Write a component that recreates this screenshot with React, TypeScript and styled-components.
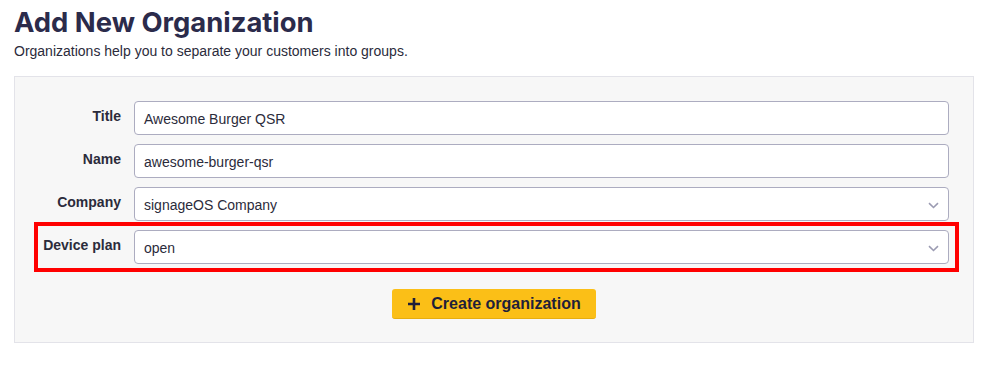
import React from "react";
import styled, { createGlobalStyle } from "styled-components";

const GlobalStyle = createGlobalStyle`
  html, body { margin: 0; padding: 0; background: #ffffff; }
  body { font-family: "Liberation Sans", Arial, sans-serif; color: #2b2b45; }
  * { box-sizing: border-box; }
`;

const Page = styled.div`
  padding: 4px 10px 0 14px;
  width: 984px;
`;

const Heading = styled.h1`
  margin: 0;
  font-family: Inter, "Liberation Sans", sans-serif;
  font-weight: 700;
  font-size: 27.4px;
  line-height: 36px;
  color: #2b2b4b;
`;

const Subtitle = styled.p`
  margin: 2px 0 0;
  font-size: 14px;
  line-height: 18px;
  color: #2b2b3b;
`;

const Panel = styled.div`
  margin-top: 16px;
  background: #f7f7f7;
  border: 1px solid #e3e3e9;
  padding: 24px 24px 23px 24px;
`;

const Form = styled.div`
  display: flex;
  flex-direction: column;
  gap: 9px;
`;

const Row = styled.div<{ $highlight?: boolean }>`
  position: relative;
  display: grid;
  grid-template-columns: 82px 1fr;
  column-gap: 13px;
  align-items: start;
  ${(p) =>
    p.$highlight &&
    `
    &::after {
      content: "";
      position: absolute;
      top: -8px;
      bottom: -8px;
      left: -5px;
      right: -10px;
      border: 4px solid #ff0000;
      pointer-events: none;
    }
  `}
`;

const Label = styled.label`
  text-align: right;
  font-weight: 700;
  font-size: 14px;
  line-height: 20px;
  padding-top: 5px;
  color: #2b2b3b;
  white-space: nowrap;
`;

const Field = styled.div`
  height: 34px;
  background: #ffffff;
  border: 1px solid #acacc0;
  border-radius: 4px;
  padding: 2px 9px 0;
  display: flex;
  align-items: center;
  justify-content: space-between;
  font-size: 14px;
  color: #2b2b3b;
`;

const Chevron = styled.svg`
  width: 11px;
  height: 7px;
  flex: none;
`;

const Actions = styled.div`
  display: flex;
  justify-content: center;
  margin-top: 25px;
`;

const Button = styled.button`
  display: inline-flex;
  align-items: center;
  gap: 10px;
  height: 30px;
  padding: 0 15px;
  background: #fbbf17;
  border: none;
  border-bottom: 1px solid #e6ad10;
  border-radius: 3px;
  font-family: "Liberation Sans", Arial, sans-serif;
  font-weight: 700;
  font-size: 16px;
  color: #1f1f3a;
  cursor: pointer;
`;

const ChevronIcon = () => (
  <Chevron viewBox="0 0 11 7">
    <path d="M1 1.2 L5.5 5.5 L10 1.2" fill="none" stroke="#9b9bb2" strokeWidth="1.6" />
  </Chevron>
);

const PlusIcon = () => (
  <svg width="14" height="14" viewBox="0 0 14 14">
    <path d="M7 1 V13 M1 7 H13" stroke="#1f1f3a" strokeWidth="2.6" />
  </svg>
);

export default function App() {
  return (
    <>
      <GlobalStyle />
      <Page>
        <Heading>Add New Organization</Heading>
        <Subtitle>Organizations help you to separate your customers into groups.</Subtitle>
        <Panel>
          <Form>
            <Row>
              <Label>Title</Label>
              <Field>Awesome Burger QSR</Field>
            </Row>
            <Row>
              <Label>Name</Label>
              <Field>awesome-burger-qsr</Field>
            </Row>
            <Row>
              <Label>Company</Label>
              <Field>
                <span>signageOS Company</span>
                <ChevronIcon />
              </Field>
            </Row>
            <Row $highlight>
              <Label>Device plan</Label>
              <Field>
                <span>open</span>
                <ChevronIcon />
              </Field>
            </Row>
          </Form>
          <Actions>
            <Button>
              <PlusIcon />
              Create organization
            </Button>
          </Actions>
        </Panel>
      </Page>
    </>
  );
}
